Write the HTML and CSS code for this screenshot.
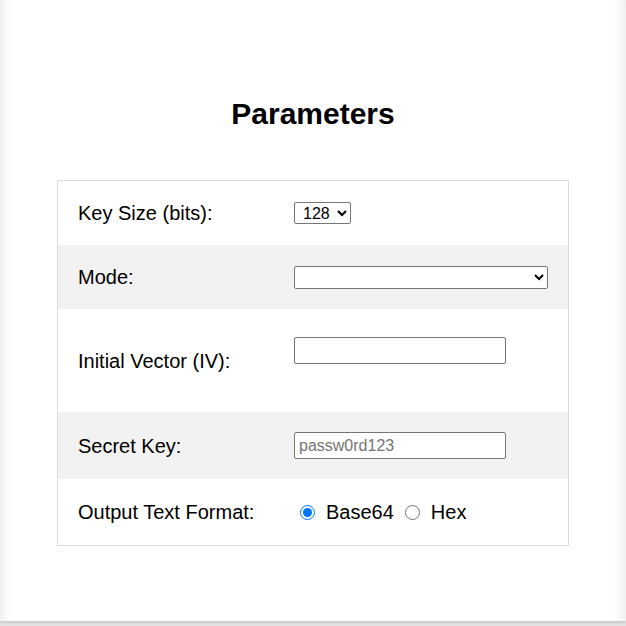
FILE: index.html
```html
<!DOCTYPE html>
<html lang="en">
<head>
<meta charset="utf-8">
<title>Parameters</title>
<link rel="stylesheet" href="styles.css">
</head>
<body>
<div class="page">
  <h2 class="title">Parameters</h2>
  <div class="params">
    <div class="row">
      <div class="label">Key Size (bits):</div>
      <div class="value">
        <select class="select select-small">
          <option>128</option>
          <option>192</option>
          <option>256</option>
        </select>
      </div>
    </div>
    <div class="row row-alt">
      <div class="label">Mode:</div>
      <div class="value">
        <select class="select select-full">
          <option></option>
        </select>
      </div>
    </div>
    <div class="row">
      <div class="label">Initial Vector (IV):</div>
      <div class="value value-iv">
        <input class="text-input" type="text">
      </div>
    </div>
    <div class="row row-alt">
      <div class="label">Secret Key:</div>
      <div class="value">
        <input class="text-input" type="text" placeholder="passw0rd123">
      </div>
    </div>
    <div class="row row-radio">
      <div class="label">Output Text Format:</div>
      <div class="value radios">
        <label class="radio-opt"><input class="radio" type="radio" name="fmt" checked><span>Base64</span></label>
        <label class="radio-opt radio-opt-2"><input class="radio" type="radio" name="fmt"><span>Hex</span></label>
      </div>
    </div>
  </div>
</div>
</body>
</html>
```

FILE: styles.css
```css
html, body {
  margin: 0;
  padding: 0;
}

body {
  background: #e4e4e4;
  font-family: "Liberation Sans", Arial, sans-serif;
  color: #000;
  height: 626px;
  overflow: hidden;
}

.page {
  background: #fff;
  height: 621px;
  box-sizing: border-box;
  padding-top: 97px;
  box-shadow:
    inset 12px 0 12px -10px rgba(0, 0, 0, 0.10),
    inset -12px 0 12px -10px rgba(0, 0, 0, 0.10),
    0 2px 3px rgba(0, 0, 0, 0.12);
}

.title {
  margin: 0 0 49px;
  font-size: 30px;
  line-height: 34px;
  font-weight: bold;
  text-align: center;
}

.params {
  width: 512px;
  box-sizing: border-box;
  margin: 0 auto;
  border: 1px solid #dcdcdc;
}

.row {
  display: grid;
  grid-template-columns: 216px 1fr;
  align-items: center;
  padding: 20px;
  background: #fff;
}

.row-alt {
  background: #f2f2f2;
}

.label {
  font-size: 20px;
  line-height: 24px;
}

.value {
  display: flex;
  align-items: center;
}

.value-iv {
  padding: 8px 0 28px;
}

.select {
  font-family: "Liberation Sans", Arial, sans-serif;
  font-size: 16px;
  height: 22px;
  border: 1px solid #767676;
  border-radius: 2px;
  background: #fff;
  color: #000;
  padding: 0 0 0 4px;
  box-sizing: border-box;
}

.select-small {
  width: 57px;
}

.select-full {
  width: 254px;
  height: 23px;
}

.text-input {
  font-family: "Liberation Sans", Arial, sans-serif;
  font-size: 16px;
  width: 212px;
  height: 27px;
  box-sizing: border-box;
  padding: 0 4px;
  border: 1px solid #767676;
  border-radius: 2px;
  margin: 0;
  background: #fff;
}

.text-input::placeholder {
  color: #757575;
}

.row-radio .value {
  height: 26px;
}

.radios {
  font-size: 20px;
}

.radio-opt {
  display: flex;
  align-items: center;
}

.radio {
  width: 15px;
  height: 15px;
  margin: 0 11px 0 6px;
  accent-color: #0075ff;
}

.radio-opt-2 .radio {
  margin-left: 11px;
}
```
